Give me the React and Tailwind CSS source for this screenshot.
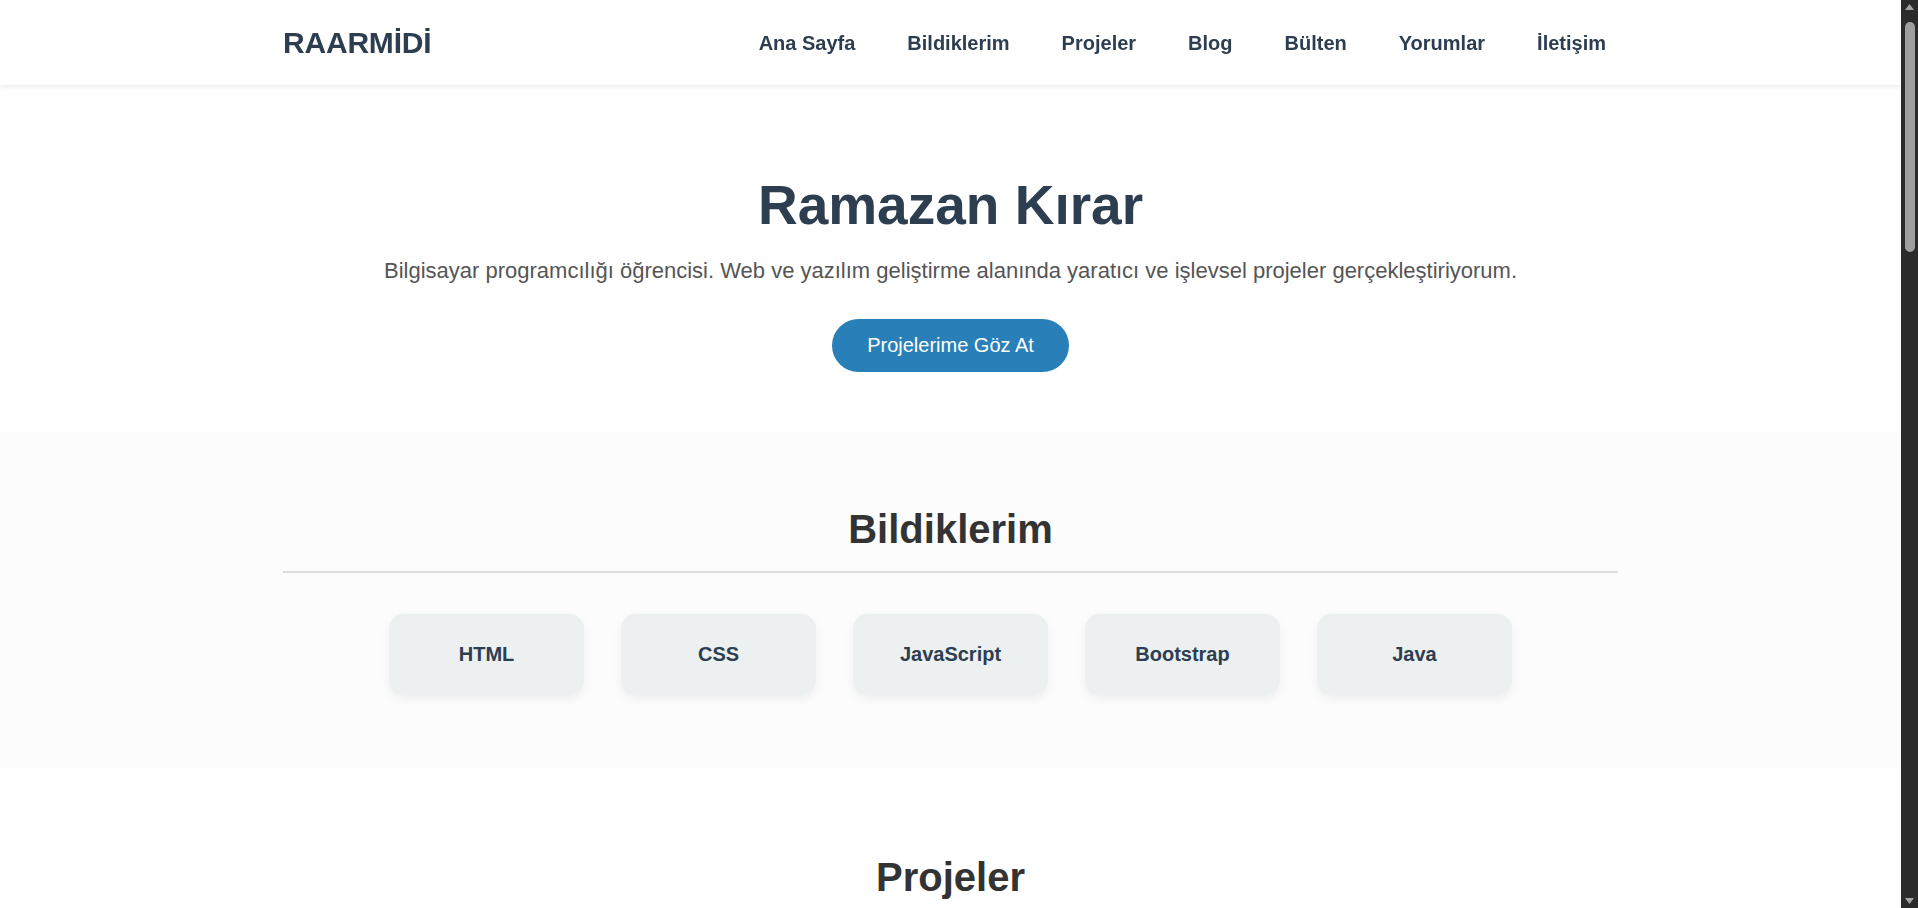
const navLinks = ['Ana Sayfa', 'Bildiklerim', 'Projeler', 'Blog', 'Bülten', 'Yorumlar', 'İletişim'];

const skills = ['HTML', 'CSS', 'JavaScript', 'Bootstrap', 'Java'];

const projects = [
  { title: 'Kişisel Web Sitesi', desc: 'HTML ve CSS ile hazırlanmış duyarlı portfolyo sayfası.' },
  { title: 'Yapılacaklar Listesi', desc: 'JavaScript ile yerel depolama kullanan görev uygulaması.' },
  { title: 'Kütüphane Sistemi', desc: 'Java ile geliştirilmiş kitap takip uygulaması.' },
];

const posts = [
  { title: 'CSS Flexbox Rehberi', date: '12 Mart 2024' },
  { title: 'JavaScript ile DOM İşlemleri', date: '28 Şubat 2024' },
  { title: "Java'ya Giriş", date: '5 Ocak 2024' },
];

function SectionTitle({ children }) {
  return (
    <div className="w-[1335px] mx-auto">
      <h2 className="text-[40px] leading-[1.2] font-bold text-[#333] text-center pb-[18px] border-b-2 border-[#ddd]">
        {children}
      </h2>
    </div>
  );
}

function Header() {
  return (
    <header className="bg-white shadow-[0_2px_5px_rgba(0,0,0,0.08)] sticky top-0 z-10">
      <div className="w-[1335px] mx-auto h-[85px] flex items-center justify-between">
        <a href="#" className="text-[30px] font-bold text-[#2c3e50] tracking-[-0.2px]">
          RAARMİDİ
        </a>
        <nav className="flex items-center gap-8 pr-[2px]">
          {navLinks.map((link) => (
            <a key={link} href="#" className="px-[10px] text-[20px] font-bold text-[#2c3e50]">
              {link}
            </a>
          ))}
        </nav>
      </div>
    </header>
  );
}

function Hero() {
  return (
    <section className="bg-white pt-[87px] pb-[60px] text-center">
      <h1 className="text-[55px] leading-[1.2] font-bold text-[#2c3e50]">Ramazan Kırar</h1>
      <p className="mt-[18px] text-[22px] leading-[1.4] text-[#555]">
        Bilgisayar programcılığı öğrencisi. Web ve yazılım geliştirme alanında yaratıcı ve işlevsel projeler gerçekleştiriyorum.
      </p>
      <a
        href="#"
        className="mt-[32px] inline-flex items-center h-[53px] px-[35px] rounded-full bg-[#2980b9] text-white text-[20px]"
      >
        Projelerime Göz At
      </a>
    </section>
  );
}

function Skills() {
  return (
    <section className="bg-[#fcfcfc] pt-[73px] pb-[73px]">
      <SectionTitle>Bildiklerim</SectionTitle>
      <div className="mt-[41px] flex justify-center gap-[37px]">
        {skills.map((skill) => (
          <div
            key={skill}
            className="w-[195px] h-[81px] rounded-[15px] bg-[#ecf0f1] shadow-[0_4px_10px_rgba(0,0,0,0.06)] flex items-center justify-center text-[20px] font-bold text-[#2c3e50]"
          >
            {skill}
          </div>
        ))}
      </div>
    </section>
  );
}

function Projects() {
  return (
    <section className="bg-white pt-[85px] pb-[80px]">
      <SectionTitle>Projeler</SectionTitle>
      <div className="w-[1335px] mx-auto mt-[41px] grid grid-cols-3 gap-[30px]">
        {projects.map((p) => (
          <div key={p.title} className="rounded-[15px] bg-[#ecf0f1] shadow-[0_4px_10px_rgba(0,0,0,0.06)] p-6">
            <div className="h-[200px] rounded-[10px] bg-[#d5dde0]" />
            <h3 className="mt-4 text-[22px] font-bold text-[#2c3e50]">{p.title}</h3>
            <p className="mt-2 text-[17px] text-[#555]">{p.desc}</p>
            <a href="#" className="mt-4 inline-block px-5 py-2 rounded-full bg-[#2980b9] text-white text-[16px]">
              İncele
            </a>
          </div>
        ))}
      </div>
    </section>
  );
}

function Blog() {
  return (
    <section className="bg-[#fcfcfc] pt-[80px] pb-[80px]">
      <SectionTitle>Blog</SectionTitle>
      <div className="w-[1335px] mx-auto mt-[41px] flex flex-col gap-5">
        {posts.map((post) => (
          <article key={post.title} className="rounded-[15px] bg-white shadow-[0_4px_10px_rgba(0,0,0,0.06)] p-6">
            <h3 className="text-[22px] font-bold text-[#2c3e50]">{post.title}</h3>
            <p className="mt-1 text-[15px] text-[#888]">{post.date}</p>
            <p className="mt-3 text-[17px] text-[#555]">
              Bu yazıda temel kavramları örneklerle anlatıyor ve pratik ipuçları paylaşıyorum.
            </p>
          </article>
        ))}
      </div>
    </section>
  );
}

function Newsletter() {
  return (
    <section className="bg-white pt-[80px] pb-[80px]">
      <SectionTitle>Bülten</SectionTitle>
      <div className="mt-[41px] text-center">
        <p className="text-[19px] text-[#555]">Yeni yazılardan ve projelerden haberdar olmak için abone olun.</p>
        <form className="mt-6 flex justify-center gap-3">
          <input
            type="email"
            placeholder="E-posta adresiniz"
            className="w-[360px] h-[50px] px-5 rounded-full border border-[#ddd] text-[17px]"
          />
          <button type="button" className="h-[50px] px-8 rounded-full bg-[#2980b9] text-white text-[17px]">
            Abone Ol
          </button>
        </form>
      </div>
    </section>
  );
}

function Comments() {
  return (
    <section className="bg-[#fcfcfc] pt-[80px] pb-[80px]">
      <SectionTitle>Yorumlar</SectionTitle>
      <div className="w-[1335px] mx-auto mt-[41px] grid grid-cols-2 gap-[30px]">
        {['Ahmet Y.', 'Elif K.', 'Mehmet D.', 'Zeynep A.'].map((name) => (
          <div key={name} className="rounded-[15px] bg-[#ecf0f1] p-6">
            <p className="text-[17px] text-[#555] italic">"Çok düzenli ve özenli bir çalışma, tebrikler!"</p>
            <p className="mt-3 text-[16px] font-bold text-[#2c3e50]">{name}</p>
          </div>
        ))}
      </div>
    </section>
  );
}

function Contact() {
  return (
    <section className="bg-white pt-[80px] pb-[80px]">
      <SectionTitle>İletişim</SectionTitle>
      <form className="w-[600px] mx-auto mt-[41px] flex flex-col gap-4">
        <input placeholder="Adınız" className="h-[50px] px-4 rounded-[10px] border border-[#ddd] text-[17px]" />
        <input placeholder="E-posta" className="h-[50px] px-4 rounded-[10px] border border-[#ddd] text-[17px]" />
        <textarea placeholder="Mesajınız" className="h-[300px] p-4 rounded-[10px] border border-[#ddd] text-[17px]" />
        <button type="button" className="h-[50px] rounded-full bg-[#2980b9] text-white text-[18px]">
          Gönder
        </button>
      </form>
    </section>
  );
}

function ScrollTrack() {
  return (
    <aside className="w-[17px] shrink-0 h-full bg-[#2b2b2b] flex flex-col items-center py-[4px]">
      <svg width="9" height="6" viewBox="0 0 9 6" className="shrink-0">
        <path d="M4.5 0 L9 6 L0 6 Z" fill="#a3a3a3" />
      </svg>
      <div className="mt-[12px] w-[10px] h-[230px] rounded-full bg-[#9f9f9f]" />
      <div className="flex-1" />
      <svg width="9" height="6" viewBox="0 0 9 6" className="shrink-0">
        <path d="M0 0 L9 0 L4.5 6 Z" fill="#a3a3a3" />
      </svg>
    </aside>
  );
}

export default function App() {
  return (
    <div className="h-screen flex bg-white font-['Liberation_Sans',Arial,sans-serif]">
      <main className="flex-1 min-w-0 h-full overflow-y-auto">
        <Header />
        <Hero />
        <Skills />
        <Projects />
        <Blog />
        <Newsletter />
        <Comments />
        <Contact />
        <footer className="bg-[#2c3e50] py-8 text-center text-[15px] text-white">
          © 2024 Ramazan Kırar. Tüm hakları saklıdır.
        </footer>
      </main>
      <ScrollTrack />
    </div>
  );
}
